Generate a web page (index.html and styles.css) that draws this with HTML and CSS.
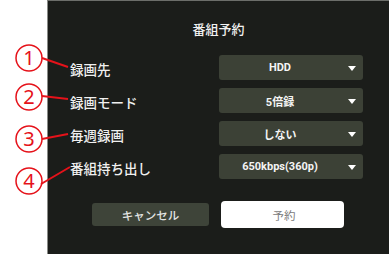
FILE: index.html
```html
<!DOCTYPE html>
<html lang="ja">
<head>
<meta charset="utf-8">
<link rel="stylesheet" href="styles.css">
</head>
<body>
<div class="page">
  <div class="gutter"></div>
  <div class="panel">
    <h1 class="title">番組予約</h1>
    <div class="form">
      <div class="label">録画先</div>
      <div class="select"><span class="value">HDD</span><span class="caret"><i></i></span></div>
      <div class="label">録画モード</div>
      <div class="select"><span class="value">5倍録</span><span class="caret"><i></i></span></div>
      <div class="label">毎週録画</div>
      <div class="select"><span class="value">しない</span><span class="caret"><i></i></span></div>
      <div class="label">番組持ち出し</div>
      <div class="select"><span class="value">650kbps(360p)</span><span class="caret"><i></i></span></div>
    </div>
    <div class="actions">
      <button class="btn cancel">キャンセル</button>
      <button class="btn ok">予約</button>
    </div>
  </div>
  <svg class="notes" width="389" height="254" viewBox="0 0 389 254">
    <g class="ring">
      <circle cx="29" cy="58" r="13"/>
      <circle cx="29" cy="97" r="13"/>
      <circle cx="29" cy="139" r="13"/>
      <circle cx="29" cy="181" r="13"/>
    </g>
    <g class="lead">
      <line x1="42" y1="58" x2="68" y2="67"/>
      <line x1="42" y1="96" x2="68" y2="99"/>
      <line x1="42" y1="139" x2="68" y2="134"/>
      <line x1="41" y1="184" x2="70" y2="167"/>
    </g>
    <g class="num">
      <text x="29" y="65">1</text>
      <text x="29" y="104">2</text>
      <text x="29" y="146">3</text>
      <text x="29" y="188">4</text>
    </g>
  </svg>
</div>
</body>
</html>
```

FILE: styles.css
```css
html, body {
  margin: 0;
  padding: 0;
  background: #ffffff;
}
body {
  font-family: Roboto, "Noto Sans CJK JP", sans-serif;
}
.page {
  position: relative;
  width: 389px;
  height: 254px;
  display: flex;
  overflow: hidden;
}
.gutter {
  width: 47px;
  flex: none;
  background: #ffffff;
}
.panel {
  flex: 1;
  background: #1b1d1a;
  border-left: 1px solid #8a8c88;
  border-top: 1px solid #6c6e6a;
  display: flex;
  flex-direction: column;
}
.title {
  margin: 0;
  height: 54px;
  display: flex;
  align-items: center;
  justify-content: center;
  font-size: 13px;
  font-weight: 500;
  color: #f2f2f2;
  font-family: "Noto Sans CJK JP", sans-serif;
}
.form {
  display: grid;
  grid-template-columns: 1fr 144px;
  grid-auto-rows: 25px;
  row-gap: 8px;
  padding: 0 26px 0 22px;
}
.label {
  display: flex;
  align-items: center;
  padding-top: 3px;
  font-family: "Noto Sans CJK JP", sans-serif;
  font-size: 13.5px;
  font-weight: 500;
  color: #f0f0f0;
}
.select {
  display: flex;
  align-items: center;
  background: #3c4136;
  border-radius: 3px;
}
.value {
  flex: 1;
  text-align: center;
  font-size: 11px;
  font-weight: 700;
  color: #f4f4f4;
}
.caret {
  width: 22px;
  flex: none;
  display: flex;
  justify-content: center;
  padding-top: 1px;
}
.caret i {
  display: block;
  width: 0;
  height: 0;
  border-left: 4.5px solid transparent;
  border-right: 4.5px solid transparent;
  border-top: 5px solid #ffffff;
}
.actions {
  display: flex;
  justify-content: center;
  align-items: center;
  gap: 12px;
  margin-top: 22px;
  padding-right: 1px;
}
.btn {
  border: none;
  margin: 0;
  padding: 0;
  font-family: "Noto Sans CJK JP", sans-serif;
  font-size: 11.5px;
}
.cancel {
  width: 117px;
  height: 23px;
  background: #3e4439;
  color: #e4e4e4;
  font-weight: 500;
  border-radius: 3px;
}
.ok {
  width: 123px;
  height: 27px;
  background: #ffffff;
  color: #7a7a7a;
  border-radius: 4px;
  padding-left: 3px;
}
.notes {
  position: absolute;
  left: 0;
  top: 0;
  pointer-events: none;
}
.ring circle {
  fill: #ffffff;
  stroke: #e5121a;
  stroke-width: 1.5;
}
.lead line {
  stroke: #e5121a;
  stroke-width: 2;
}
.num text {
  fill: #e5121a;
  font-family: "Noto Sans", sans-serif;
  font-size: 20px;
  text-anchor: middle;
}
```
